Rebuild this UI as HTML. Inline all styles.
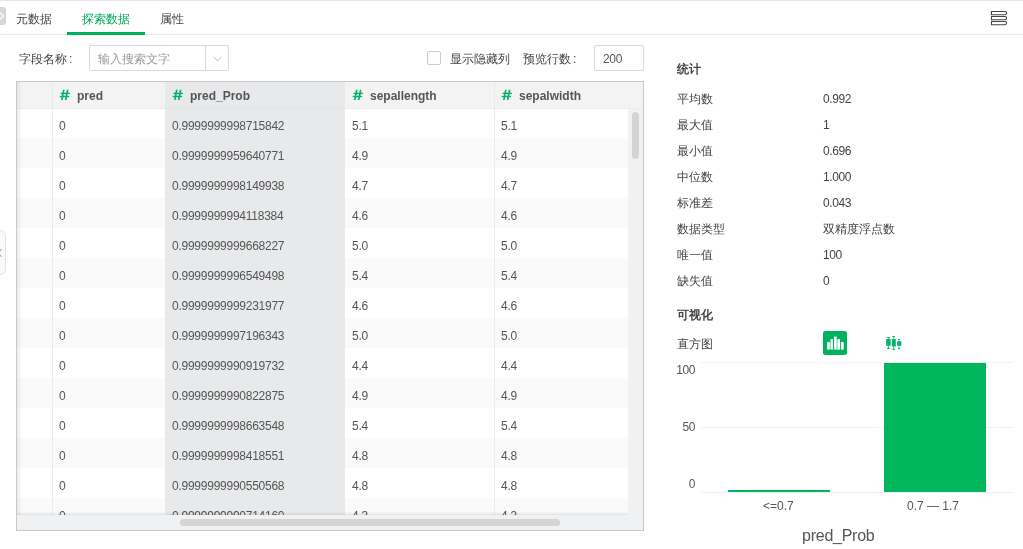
<!DOCTYPE html>
<html><head><meta charset="utf-8">
<style>
*{box-sizing:border-box;margin:0;padding:0}
html,body{width:1023px;height:549px;overflow:hidden;background:#fff;}
body{will-change:transform;font-family:"Liberation Sans",sans-serif;color:#555;font-size:12px}
.abs{position:absolute}
#topline{left:0;top:0;width:1023px;height:1px;background:#e6e8ec}
#tabline{left:0;top:34px;width:1023px;height:1px;background:#e6e8ec}
#handle{left:0;top:7px;width:6px;height:18px;background:#d6d6d6;border-radius:0 3px 3px 0}
.tab{top:12px;font-size:12px;line-height:14px;color:#444}
#tabul{left:67px;top:32px;width:78px;height:3px;background:#00b15b}
.lbl{font-size:12px;color:#444;line-height:14px;white-space:nowrap}
#search{left:89px;top:45px;width:140px;height:26px;border:1px solid #d9d9d9;border-radius:2px}
#search span{position:absolute;left:8px;top:6px;color:#999;font-size:12px;line-height:14px}
#search i{position:absolute;left:115px;top:0;width:1px;height:24px;background:#d9d9d9}
#chk{left:427px;top:51px;width:14px;height:14px;border:1px solid #ccc;border-radius:2px}
#rows{left:594px;top:45px;width:50px;height:26px;border:1px solid #d9d9d9;border-radius:2px}
#rows span{position:absolute;left:8px;top:6px;color:#555;font-size:12px;line-height:14px;letter-spacing:-0.3px}
#tbl{left:16px;top:81px;width:628px;height:450px;border:1px solid #c9c9c9;overflow:hidden;background:#f0f1f3}
.hdr{position:absolute;top:0;height:26px;background:#f3f3f3;font-weight:bold;font-size:12px;color:#555;line-height:26px;white-space:nowrap}
.hdr b{position:absolute;top:0;color:#00b15b;font-size:15px}
.row{position:absolute;left:0;width:611px;height:30px}
.cell{position:absolute;height:30px;line-height:30px;font-size:12px;color:#555;letter-spacing:-0.25px;white-space:nowrap}
</style></head><body>
<div class="abs" id="topline"></div>
<div class="abs" id="handle"></div>
<svg class="abs" style="left:0;top:11px" width="5" height="10" viewBox="0 0 5 10"><path d="M0 1.5l3.5 3.5-3.5 3.5" fill="none" stroke="#fff" stroke-width="1.3"/></svg>
<div class="abs tab" style="left:16px">元数据</div>
<div class="abs tab" style="left:82px;color:#00a856">探索数据</div>
<div class="abs tab" style="left:160px">属性</div>
<div class="abs" id="tabline"></div>
<div class="abs" id="tabul"></div>
<svg class="abs" style="left:990px;top:10px" width="18" height="16" viewBox="0 0 18 16"><g fill="none" stroke="#444" stroke-width="1.1"><path d="M1.5 1.5h13.5a1.6 1.6 0 0 1 0 3.2h-13.5z"/><path d="M1.5 6.5h13.5a1.6 1.6 0 0 1 0 3.2h-13.5z"/><path d="M1.5 11.5h13.5a1.6 1.6 0 0 1 0 3.2h-13.5z"/></g></svg>
<div class="abs lbl" style="left:19px;top:52px">字段名称<span style="margin-left:2px">:</span></div>
<div class="abs" id="search"><span>输入搜索文字</span><i></i><svg style="position:absolute;left:123px;top:10px" width="9" height="6" viewBox="0 0 9 6"><path d="M0.5 0.8l4 4 4-4" fill="none" stroke="#bbb" stroke-width="1"/></svg></div>
<div class="abs" id="chk"></div>
<div class="abs lbl" style="left:450px;top:52px">显示隐藏列</div>
<div class="abs lbl" style="left:523px;top:52px">预览行数<span style="margin-left:2px">:</span></div>
<div class="abs" id="rows"><span>200</span></div>
<div class="abs" id="tbl">
<div class="row" style="top:26px;background:#fff"></div>
<div class="row" style="top:26px;left:148px;width:180px;background:#e8e9eb"></div>
<div class="cell" style="top:29px;left:42px">0</div>
<div class="cell" style="top:29px;left:155px">0.9999999998715842</div>
<div class="cell" style="top:29px;left:335px">5.1</div>
<div class="cell" style="top:29px;left:484px">5.1</div>
<div class="row" style="top:56px;background:#fafafa"></div>
<div class="row" style="top:56px;left:148px;width:180px;background:#e8e9eb"></div>
<div class="cell" style="top:59px;left:42px">0</div>
<div class="cell" style="top:59px;left:155px">0.9999999959640771</div>
<div class="cell" style="top:59px;left:335px">4.9</div>
<div class="cell" style="top:59px;left:484px">4.9</div>
<div class="row" style="top:86px;background:#fff"></div>
<div class="row" style="top:86px;left:148px;width:180px;background:#e8e9eb"></div>
<div class="cell" style="top:89px;left:42px">0</div>
<div class="cell" style="top:89px;left:155px">0.9999999998149938</div>
<div class="cell" style="top:89px;left:335px">4.7</div>
<div class="cell" style="top:89px;left:484px">4.7</div>
<div class="row" style="top:116px;background:#fafafa"></div>
<div class="row" style="top:116px;left:148px;width:180px;background:#e8e9eb"></div>
<div class="cell" style="top:119px;left:42px">0</div>
<div class="cell" style="top:119px;left:155px">0.9999999994118384</div>
<div class="cell" style="top:119px;left:335px">4.6</div>
<div class="cell" style="top:119px;left:484px">4.6</div>
<div class="row" style="top:146px;background:#fff"></div>
<div class="row" style="top:146px;left:148px;width:180px;background:#e8e9eb"></div>
<div class="cell" style="top:149px;left:42px">0</div>
<div class="cell" style="top:149px;left:155px">0.9999999999668227</div>
<div class="cell" style="top:149px;left:335px">5.0</div>
<div class="cell" style="top:149px;left:484px">5.0</div>
<div class="row" style="top:176px;background:#fafafa"></div>
<div class="row" style="top:176px;left:148px;width:180px;background:#e8e9eb"></div>
<div class="cell" style="top:179px;left:42px">0</div>
<div class="cell" style="top:179px;left:155px">0.9999999996549498</div>
<div class="cell" style="top:179px;left:335px">5.4</div>
<div class="cell" style="top:179px;left:484px">5.4</div>
<div class="row" style="top:206px;background:#fff"></div>
<div class="row" style="top:206px;left:148px;width:180px;background:#e8e9eb"></div>
<div class="cell" style="top:209px;left:42px">0</div>
<div class="cell" style="top:209px;left:155px">0.9999999999231977</div>
<div class="cell" style="top:209px;left:335px">4.6</div>
<div class="cell" style="top:209px;left:484px">4.6</div>
<div class="row" style="top:236px;background:#fafafa"></div>
<div class="row" style="top:236px;left:148px;width:180px;background:#e8e9eb"></div>
<div class="cell" style="top:239px;left:42px">0</div>
<div class="cell" style="top:239px;left:155px">0.9999999997196343</div>
<div class="cell" style="top:239px;left:335px">5.0</div>
<div class="cell" style="top:239px;left:484px">5.0</div>
<div class="row" style="top:266px;background:#fff"></div>
<div class="row" style="top:266px;left:148px;width:180px;background:#e8e9eb"></div>
<div class="cell" style="top:269px;left:42px">0</div>
<div class="cell" style="top:269px;left:155px">0.9999999990919732</div>
<div class="cell" style="top:269px;left:335px">4.4</div>
<div class="cell" style="top:269px;left:484px">4.4</div>
<div class="row" style="top:296px;background:#fafafa"></div>
<div class="row" style="top:296px;left:148px;width:180px;background:#e8e9eb"></div>
<div class="cell" style="top:299px;left:42px">0</div>
<div class="cell" style="top:299px;left:155px">0.9999999990822875</div>
<div class="cell" style="top:299px;left:335px">4.9</div>
<div class="cell" style="top:299px;left:484px">4.9</div>
<div class="row" style="top:326px;background:#fff"></div>
<div class="row" style="top:326px;left:148px;width:180px;background:#e8e9eb"></div>
<div class="cell" style="top:329px;left:42px">0</div>
<div class="cell" style="top:329px;left:155px">0.9999999998663548</div>
<div class="cell" style="top:329px;left:335px">5.4</div>
<div class="cell" style="top:329px;left:484px">5.4</div>
<div class="row" style="top:356px;background:#fafafa"></div>
<div class="row" style="top:356px;left:148px;width:180px;background:#e8e9eb"></div>
<div class="cell" style="top:359px;left:42px">0</div>
<div class="cell" style="top:359px;left:155px">0.9999999998418551</div>
<div class="cell" style="top:359px;left:335px">4.8</div>
<div class="cell" style="top:359px;left:484px">4.8</div>
<div class="row" style="top:386px;background:#fff"></div>
<div class="row" style="top:386px;left:148px;width:180px;background:#e8e9eb"></div>
<div class="cell" style="top:389px;left:42px">0</div>
<div class="cell" style="top:389px;left:155px">0.9999999990550568</div>
<div class="cell" style="top:389px;left:335px">4.8</div>
<div class="cell" style="top:389px;left:484px">4.8</div>
<div class="row" style="top:416px;background:#fafafa"></div>
<div class="row" style="top:416px;left:148px;width:180px;background:#e8e9eb"></div>
<div class="cell" style="top:419px;left:42px">0</div>
<div class="cell" style="top:419px;left:155px">0.9999999990714160</div>
<div class="cell" style="top:419px;left:335px">4.3</div>
<div class="cell" style="top:419px;left:484px">4.3</div>
<div class="abs" style="left:35px;top:0;width:1px;height:433px;background:#ebebeb"></div>
<div class="abs" style="left:477px;top:0;width:1px;height:433px;background:#ebebeb"></div>
<div class="abs" style="left:0;top:0;width:5px;height:433px;background:linear-gradient(to right,rgba(0,0,0,0.08),rgba(0,0,0,0))"></div>
<div class="abs" style="left:0;top:429px;width:611px;height:4px;background:linear-gradient(to bottom,rgba(0,0,0,0),rgba(0,0,0,0.03) 50%,rgba(0,0,0,0.1))"></div>
<div class="abs" style="left:0;top:433px;width:626px;height:16px;background:#f0f1f3"></div>
<div class="abs" style="left:163px;top:437px;width:380px;height:7px;background:#d4d4d4;border-radius:4px"></div>
<div class="abs" style="left:611px;top:26px;width:15px;height:407px;background:#f0f1f3"></div>
<div class="abs" style="left:615px;top:30px;width:7px;height:47px;background:#d4d4d4;border-radius:4px"></div>
<div class="hdr" style="left:0;width:626px;height:27px;border-bottom:1px solid #ececec"></div>
<div class="hdr" style="left:148px;width:180px;height:27px;background:#e8e9eb;border-bottom:1px solid #e2e3e5"></div>
<div class="abs" style="left:0;top:0;width:5px;height:27px;background:linear-gradient(to right,rgba(0,0,0,0.06),rgba(0,0,0,0))"></div>
<div class="abs" style="left:35px;top:0;width:1px;height:27px;background:#e9e9e9"></div>
<div class="abs" style="left:477px;top:0;width:1px;height:27px;background:#e9e9e9"></div>
<svg class="abs" style="left:41px;top:7px" width="12" height="12" viewBox="0 0 12 12"><g fill="#00b368" transform="translate(0.8,0)"><path d="M4.1 0.8h1.7l-1.9 10.1h-1.7z"/><path d="M8 0.8h1.7l-2 10.1h-1.7z"/><rect x="1.75" y="3.7" width="9.35" height="1.4"/><rect x="0.9" y="6.8" width="9.4" height="1.4"/></g></svg>
<div class="hdr" style="left:60px;top:1px;background:transparent">pred</div>
<svg class="abs" style="left:154px;top:7px" width="12" height="12" viewBox="0 0 12 12"><g fill="#00b368" transform="translate(0.8,0)"><path d="M4.1 0.8h1.7l-1.9 10.1h-1.7z"/><path d="M8 0.8h1.7l-2 10.1h-1.7z"/><rect x="1.75" y="3.7" width="9.35" height="1.4"/><rect x="0.9" y="6.8" width="9.4" height="1.4"/></g></svg>
<div class="hdr" style="left:173px;top:1px;background:transparent">pred_Prob</div>
<svg class="abs" style="left:334px;top:7px" width="12" height="12" viewBox="0 0 12 12"><g fill="#00b368" transform="translate(0.8,0)"><path d="M4.1 0.8h1.7l-1.9 10.1h-1.7z"/><path d="M8 0.8h1.7l-2 10.1h-1.7z"/><rect x="1.75" y="3.7" width="9.35" height="1.4"/><rect x="0.9" y="6.8" width="9.4" height="1.4"/></g></svg>
<div class="hdr" style="left:353px;top:1px;background:transparent">sepallength</div>
<svg class="abs" style="left:483px;top:7px" width="12" height="12" viewBox="0 0 12 12"><g fill="#00b368" transform="translate(0.8,0)"><path d="M4.1 0.8h1.7l-1.9 10.1h-1.7z"/><path d="M8 0.8h1.7l-2 10.1h-1.7z"/><rect x="1.75" y="3.7" width="9.35" height="1.4"/><rect x="0.9" y="6.8" width="9.4" height="1.4"/></g></svg>
<div class="hdr" style="left:502px;top:1px;background:transparent">sepalwidth</div>
</div>
<div class="abs lbl" style="left:677px;top:62px;font-weight:bold">统计</div>
<div class="abs lbl" style="left:677px;top:92px">平均数</div>
<div class="abs lbl" style="left:823px;top:92px;letter-spacing:-0.4px">0.992</div>
<div class="abs lbl" style="left:677px;top:118px">最大值</div>
<div class="abs lbl" style="left:823px;top:118px;letter-spacing:-0.4px">1</div>
<div class="abs lbl" style="left:677px;top:144px">最小值</div>
<div class="abs lbl" style="left:823px;top:144px;letter-spacing:-0.4px">0.696</div>
<div class="abs lbl" style="left:677px;top:170px">中位数</div>
<div class="abs lbl" style="left:823px;top:170px;letter-spacing:-0.4px">1.000</div>
<div class="abs lbl" style="left:677px;top:196px">标准差</div>
<div class="abs lbl" style="left:823px;top:196px;letter-spacing:-0.4px">0.043</div>
<div class="abs lbl" style="left:677px;top:222px">数据类型</div>
<div class="abs lbl" style="left:823px;top:222px;letter-spacing:0">双精度浮点数</div>
<div class="abs lbl" style="left:677px;top:248px">唯一值</div>
<div class="abs lbl" style="left:823px;top:248px;letter-spacing:-0.4px">100</div>
<div class="abs lbl" style="left:677px;top:274px">缺失值</div>
<div class="abs lbl" style="left:823px;top:274px;letter-spacing:-0.4px">0</div>
<div class="abs lbl" style="left:677px;top:308px;font-weight:bold">可视化</div>
<div class="abs lbl" style="left:677px;top:337px">直方图</div>
<svg class="abs" style="left:823px;top:331px" width="24" height="24" viewBox="0 0 24 24"><rect width="24" height="24" rx="2.5" fill="#00b15e"/><rect x="13.6" y="8.2" width="0.9" height="10.4" fill="#b3ecd0"/><g fill="#fff"><rect x="4.1" y="11.1" width="2.7" height="7.5"/><rect x="7.5" y="8.2" width="2.5" height="10.4"/><rect x="11.1" y="5.5" width="2.5" height="13.1"/><rect x="14.5" y="8.2" width="2.5" height="10.4"/><rect x="17.9" y="11.1" width="2.8" height="7.5"/></g></svg>
<svg class="abs" style="left:880px;top:330px" width="28" height="24" viewBox="0 0 28 24"><g fill="#03b46a"><rect x="6.1" y="9" width="4.6" height="6.75" rx="0.6"/><rect x="8" y="7.5" width="0.8" height="10.8"/><rect x="7" y="7" width="2.8" height="1" rx="0.5"/><rect x="7" y="17.9" width="2.8" height="1" rx="0.5"/><rect x="11.8" y="9" width="4" height="7.6" rx="0.5"/><rect x="13.4" y="6.5" width="0.8" height="12.8"/><rect x="12.25" y="6.1" width="2.8" height="1" rx="0.5"/><rect x="12.25" y="18.8" width="2.8" height="1" rx="0.5"/><rect x="17.06" y="11.15" width="4.3" height="4.6" rx="0.5"/><rect x="18.6" y="9.5" width="0.8" height="8.8"/><rect x="17.9" y="9" width="2.2" height="0.9" rx="0.45"/><rect x="17.9" y="17.9" width="2.2" height="1" rx="0.5"/></g></svg>
<div class="abs" style="left:701px;top:362px;width:312px;height:1px;background:#eff2f6"></div>
<div class="abs" style="left:701px;top:427px;width:312px;height:1px;background:#eff2f6"></div>
<div class="abs" style="left:701px;top:492px;width:312px;height:1px;background:#eceef2"></div>
<div class="abs lbl" style="left:659px;width:36px;text-align:right;top:363px;color:#555;letter-spacing:-0.4px">100</div>
<div class="abs lbl" style="left:659px;width:36px;text-align:right;top:420px;color:#555;letter-spacing:-0.4px">50</div>
<div class="abs lbl" style="left:659px;width:36px;text-align:right;top:477px;color:#555;letter-spacing:-0.4px">0</div>
<div class="abs" style="left:728px;top:490px;width:102px;height:2px;background:#00b75e"></div>
<div class="abs" style="left:884px;top:363px;width:102px;height:129px;background:#00b75e"></div>
<div class="abs lbl" style="left:763px;top:499px;color:#555">&lt;=0.7</div>
<div class="abs lbl" style="left:907px;top:499px;color:#555">0.7 — 1.7</div>
<div class="abs" style="left:802px;top:527px;font-size:16px;line-height:18px;color:#555;letter-spacing:-0.25px">pred_Prob</div>
<div class="abs" style="left:-6px;top:230px;width:12px;height:45px;border:1px solid #dfe4ea;border-radius:6px;background:#f9fafb"></div>
<svg class="abs" style="left:-2px;top:248px" width="4" height="10" viewBox="0 0 4 10"><path d="M3.5 1l-3 4 3 4" fill="none" stroke="#999" stroke-width="1"/></svg>
</body></html>
